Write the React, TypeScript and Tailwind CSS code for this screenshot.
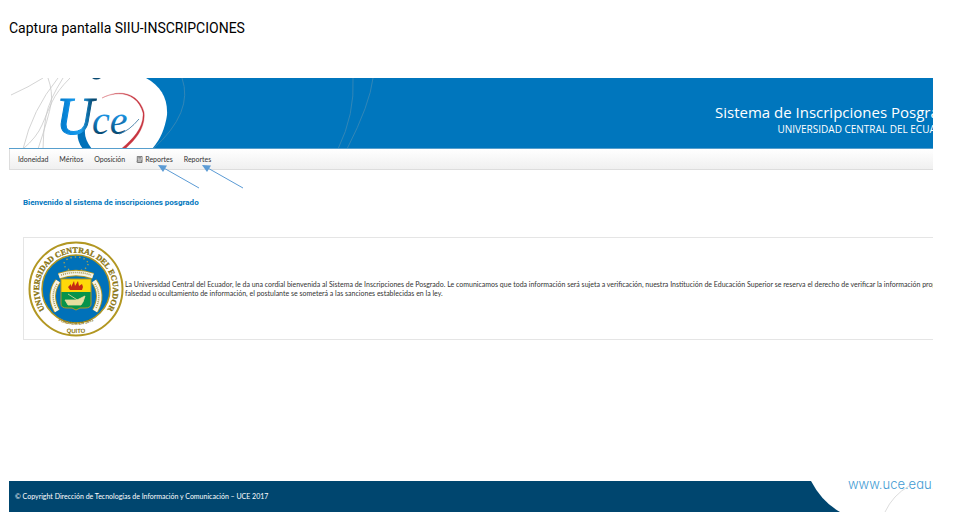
import type { ReactNode } from 'react';

const menu = ['Idoneidad', 'Méritos', 'Oposición'];

function NavButton({ children }: { children: ReactNode }) {
  return (
    <button type="button" className="flex items-center gap-[2px] whitespace-nowrap">
      {children}
    </button>
  );
}

function ReportIcon() {
  return (
    <svg aria-hidden viewBox="0 0 7 7" className="h-[7px] w-[7px]" fill="none" stroke="#555" strokeWidth="0.8">
      <path d="M1.3 0.4H6V5H1.3ZM1.3 5Q0.5 6.5 1.5 6.5H6V5" />
      <path d="M2.2 1.7h2.8M2.2 3h2.8" />
    </svg>
  );
}

function UceLogo() {
  return (
    <svg role="img" aria-label="UCE" viewBox="0 0 370 71" className="block h-[71px] w-[370px] max-w-full">
      <defs>
        <linearGradient id="ink-u" x1="0" y1="0" x2="1" y2="0">
          <stop offset="0" stopColor="#0071b9" />
          <stop offset="0.3" stopColor="#0a8ae0" />
          <stop offset="0.6" stopColor="#1aa0f0" />
          <stop offset="0.9" stopColor="#064870" />
        </linearGradient>
        <linearGradient id="ink-ce" x1="0" y1="1" x2="0" y2="0">
          <stop offset="0.2" stopColor="#064870" />
          <stop offset="0.6" stopColor="#1a90dd" />
          <stop offset="1" stopColor="#36a9ee" />
        </linearGradient>
      </defs>
      <path d="M0 0H137C152 8 159 21 158 37C156 51 151 62 143 71H0Z" fill="#fff" />
      <g fill="none" stroke="#c9c9c9" strokeWidth="0.8">
        <path d="M2 17Q20 9 34 0" />
        <path d="M49 0Q23 32 14 71" />
        <path d="M61 0Q48 13 43 24T33 47T14 71" />
        <path d="M39 0Q44 14 42 26T29 71" />
        <path d="M54 0Q40 22 37 38T34 71" />
      </g>
      <g fill="none" stroke="#3f8ab5" strokeWidth="0.8">
        <path d="M173 0Q185 34 144 71" />
        <path d="M344 0Q346 36 329 71" />
        <path d="M364 0Q361 26 338 71" />
      </g>
      <path d="M83 0Q87 3 92 0Z" fill="#064870" />
      <path d="M69 52Q67 62 74 71H83Q75 61 76 52Z" fill="#0071b9" />
      <text x="47" y="56" fill="url(#ink-u)" className="font-['Liberation_Serif',serif] text-[52px] italic" stroke="url(#ink-u)">U</text>
      <text x="83" y="56" fill="url(#ink-ce)" className="font-['Liberation_Serif',serif] text-[40px] italic">ce</text>
      <path d="M110 56Q120 53 130 41" fill="none" stroke="#2f6f9c" strokeWidth="0.8" />
      <path d="M93 20C112 10 130 16 135 34C137 50 126 62 116 71H112C123 62 135 50 134 35C129 17 112 11 93 20Z" fill="#c73540" stroke="#c73540" strokeWidth="0.3" />
    </svg>
  );
}

function Seal() {
  return (
    <svg role="img" aria-label="Universidad Central del Ecuador, Quito" viewBox="0 0 96 96" className="h-24 w-24 shrink-0">
      <defs>
        <path id="seal-top" d="M17 69A37 37 0 1 1 79 69" />
        <path id="seal-low" d="M22 74A39 39 0 0 0 74 74" />
        <path id="seal-base" d="M30 90Q48 94 66 90" />
      </defs>
      <circle cx="48" cy="48" r="46.5" fill="#fff" stroke="#b29722" strokeWidth="2" />
      <circle cx="48" cy="48" r="34" fill="#0071b9" stroke="#b29722" strokeWidth="1.5" />
      <g fill="#8a7410" className="font-['Liberation_Serif',serif] font-bold">
        <text className="text-[8px]" textAnchor="middle" stroke="#8a7410" strokeWidth="0.3">
          <textPath href="#seal-top" startOffset="50%">UNIVERSIDAD CENTRAL DEL ECUADOR</textPath>
        </text>
        <text className="font-['Liberation_Sans',sans-serif] text-[4px]" textAnchor="middle">
          <textPath href="#seal-low" startOffset="50%">FUNDADA EN 1651</textPath>
        </text>
        <text className="font-['Liberation_Sans',sans-serif] text-[6px]" textAnchor="middle">
          <textPath href="#seal-base" startOffset="50%">QUITO</textPath>
        </text>
      </g>
      <ellipse cx="48" cy="23" rx="12" ry="7" fill="none" stroke="#a8a050" strokeWidth="1.4" strokeDasharray="1.4 3" />
      <g fill="none">
        <path d="M30 40Q20 54 29 70M66 40Q76 54 67 70M31 35Q48 29 65 35" stroke="#b29722" strokeWidth="6.4" />
        <path d="M30 40Q20 54 29 70M66 40Q76 54 67 70M31 35Q48 29 65 35" stroke="#f6f4e8" strokeWidth="4.6" />
        <path d="M29 43Q22 54 28 67M67 43Q74 54 68 67M33 34Q48 29 63 34" stroke="#a99a55" strokeWidth="1.6" strokeDasharray="1 1" />
      </g>
      <path d="M33 38H63V51H33Z" fill="#ffd90a" />
      <path d="M33 51H63V63Q63 67 57 67H52L48 69L44 67H39Q33 67 33 63Z" fill="#07934b" />
      <path d="M33 38H63V63Q63 67 57 67H52L48 69L44 67H39Q33 67 33 63Z" fill="none" stroke="#b29722" />
      <path d="M42 49L40 46L43 43V46L46 40L47 45L50 40L51 45L54 43L55 46L54 49Z" fill="#c52a13" />
      <path d="M37 59H49L57 55L55 61L53 64H40ZM40 53L51 60" fill="#e7dda0" stroke="#e7dda0" strokeWidth="0.8" />
    </svg>
  );
}

function Arrow() {
  return (
    <svg aria-hidden viewBox="0 0 42 25" className="h-[25px] w-[42px]">
      <path d="M4 3L41 24" stroke="#5b9bd5" strokeWidth="1" />
      <path d="M0 1L9 1.5L5 8Z" fill="#5b9bd5" />
    </svg>
  );
}

export default function App() {
  return (
    <main className="bg-white pt-[18px] pr-[47px] pb-3 pl-[9px] font-['Lato',sans-serif] text-[7px] text-[#333]">
      <h1 className="font-['Roboto',sans-serif] text-[14px] leading-5 text-black">Captura pantalla SIIU-INSCRIPCIONES</h1>

      <div className="mt-10 overflow-hidden">
        <header className="flex h-[71px] justify-between overflow-hidden border-b border-[#579fcd] bg-[#0076bd]">
          <UceLogo />
          <div className="mt-[25px] -mr-6 shrink-0 text-right font-['Open_Sans',sans-serif] whitespace-nowrap text-white">
            <p className="text-[15px] leading-[18px]">Sistema de Inscripciones Posgrado</p>
            <p className="text-[10px] leading-4">UNIVERSIDAD CENTRAL DEL ECUADOR</p>
          </div>
        </header>

        <nav aria-label="Principal" className="relative flex h-[21px] items-center gap-[11px] border-b border-l border-[#ddd] bg-linear-to-b from-white to-[#f0f0f0] pl-2">
          {menu.map((item) => (
            <NavButton key={item}>{item}</NavButton>
          ))}
          <NavButton>
            <ReportIcon />
            Reportes
          </NavButton>
          <NavButton>Reportes</NavButton>
          {/* Callout arrows over the two report entries */}
          <div className="absolute top-[15px] left-[148px]"><Arrow /></div>
          <div className="absolute top-[15px] left-[192px]"><Arrow /></div>
        </nav>

        <h2 className="mt-[27px] pl-[14px] font-['Roboto',sans-serif] text-[8px] leading-3 font-bold text-[#0076bd]">
          Bienvenido al sistema de inscripciones posgrado
        </h2>

        <section className="mt-7 ml-[14px] flex h-[103px] items-center border border-r-0 border-[#e5e5e5] pl-1">
          <Seal />
          <p className="pl-px leading-[9px] whitespace-nowrap">
            La Universidad Central del Ecuador, le da una cordial bienvenida al Sistema de Inscripciones de Posgrado. Le comunicamos que toda información será sujeta a verificación, nuestra Institución de Educación Superior se reserva el derecho de verificar la información proporcionada,
            <br />
            falsedad u ocultamiento de información, el postulante se someterá a las sanciones establecidas en la ley.
          </p>
        </section>

        <footer className="mt-[141px] flex h-[31px] justify-between overflow-hidden bg-[#00466f] text-white">
          <p className="self-center pl-[6px]">© Copyright Dirección de Tecnologías de Información y Comunicación – UCE 2017</p>
          <div className="relative shrink-0">
            <svg aria-hidden viewBox="0 0 122 31" className="h-[31px] w-[122px]">
              <path d="M0 0Q11 21 29 31H122V0Z" fill="#fff" />
              <path d="M74 31Q82 14 98 5" fill="none" stroke="#ddd" />
            </svg>
            <a href="#uce" className="absolute -top-1 left-[37px] font-['Inter',sans-serif] text-[13px] leading-[14px] font-light text-[#429bd3]">www.uce.edu.ec</a>
          </div>
        </footer>
      </div>
    </main>
  );
}
